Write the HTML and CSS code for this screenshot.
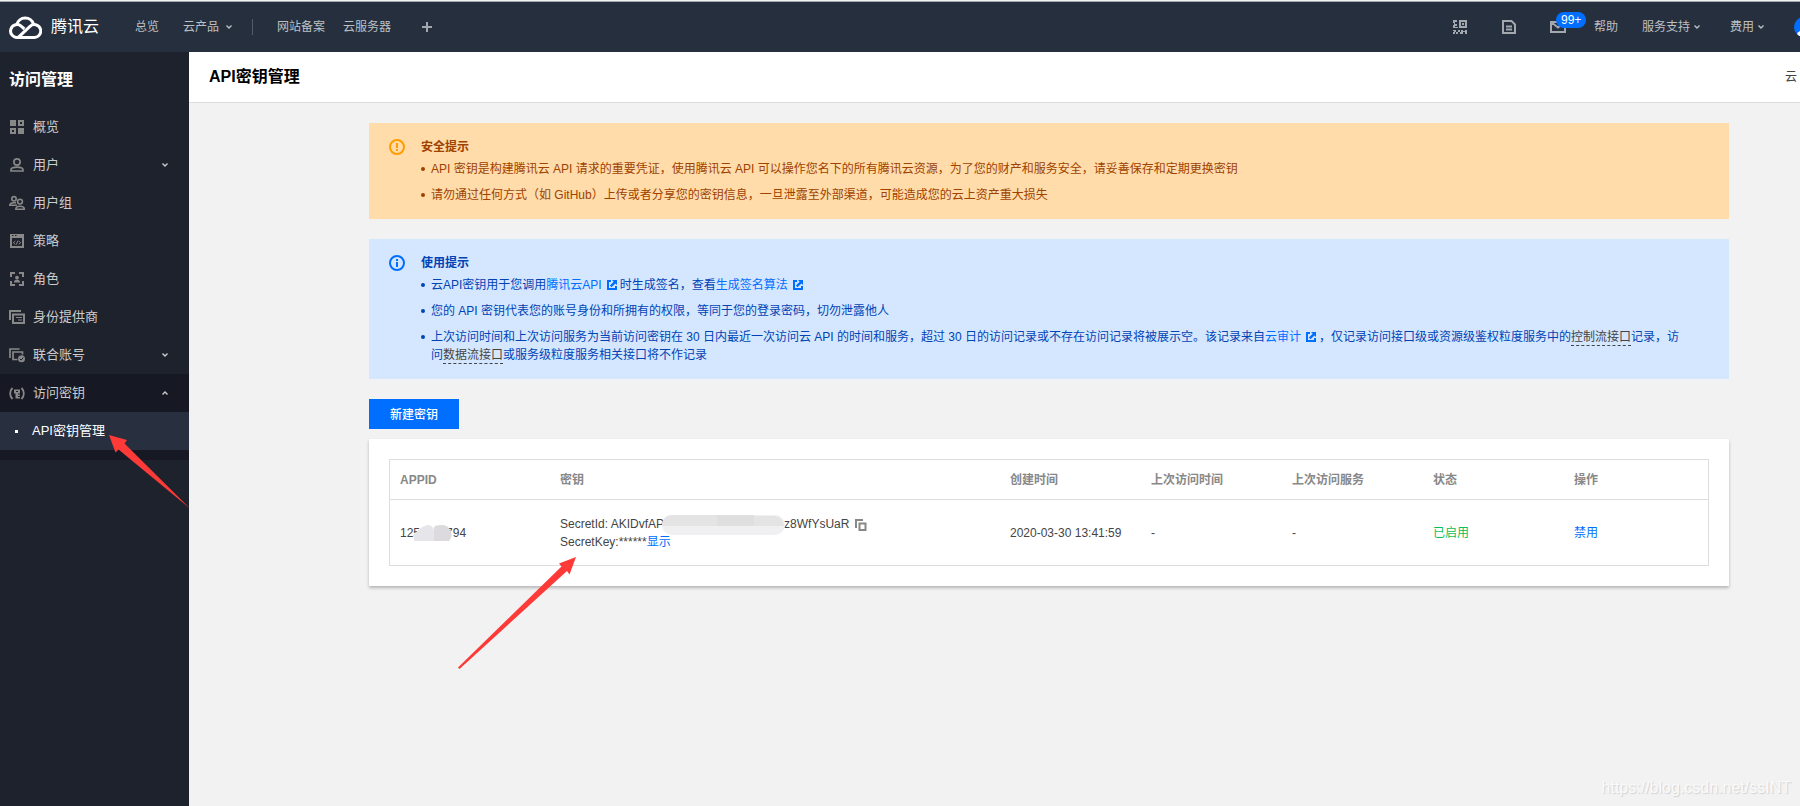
FILE: index.html
```html
<!DOCTYPE html>
<html lang="zh-CN">
<head>
<meta charset="utf-8">
<meta name="viewport" content="width=device-width, initial-scale=1">
<title>API密钥管理 - 访问管理 - 腾讯云</title>
<link rel="stylesheet" href="styles.css">
</head>
<body>
<svg class="defs" aria-hidden="true">
  <symbol id="chevron" viewBox="0 0 6 6"><path d="M0.5 1.5L3 4L5.5 1.5" fill="none" stroke="currentColor" stroke-width="1.4"/></symbol>
  <symbol id="external" viewBox="0 0 10 10"><path d="M0 0H4V2H2V8H8V6H10V10H0ZM5 0H10V5L8.400 3.400L4.500 7.200L2.900 5.600L6.700 1.800Z" fill="currentColor"/></symbol>
</svg>

<header class="topbar">
  <a class="logo" href="#">
    <svg class="logo-mark" viewBox="0 0 33 24" fill="none" stroke="#fff" stroke-width="3" stroke-linejoin="round">
      <path d="M8 22.4H25.5A6.4 6.4 0 1 0 21 11.3L9.5 22.2"/>
      <path d="M8.5 22.4A6.4 6.4 0 1 1 12.4 11.4L15.4 14"/>
      <path d="M7.8 9.6A8.7 8.7 0 0 1 24.6 9.4"/>
    </svg>
    <span>腾讯云</span>
  </a>
  <nav class="nav-main">
    <a href="#">总览</a>
    <a href="#">云产品<svg class="chevron"><use href="#chevron"/></svg></a>
  </nav>
  <nav class="nav-pinned">
    <a href="#">网站备案</a>
    <a href="#">云服务器</a>
  </nav>
  <button class="add" type="button" aria-label="添加">
    <svg viewBox="0 0 10 10"><path d="M4 0H6V4H10V6H6V10H4V6H0V4H4Z" fill="currentColor"/></svg>
  </button>
  <div class="tools">
    <a href="#" aria-label="扫码"><svg class="icon" viewBox="0 0 16 16" fill="currentColor">
      <path fill-rule="evenodd" d="M1 1H5V3H3V5H5V7H3V9H1V6H2V4H1ZM7 1H15V9H7ZM9 3V7H13V3ZM10 4H12V6H10ZM3 8H6V9H3ZM1 11H4V13H6V11H8V13H6V15H4V13H3V15H1V13H2V12H1ZM9 11H11V12H13V11H15V15H13V13H11V15H8V13H9Z"/></svg></a>
    <a href="#" aria-label="工单"><svg class="icon" viewBox="0 0 16 16" fill="none" stroke="currentColor" stroke-width="2">
      <path d="M2 2H10.5L14 5.5V14H2ZM5 7.5H11M5 10.5H11"/></svg></a>
    <a class="mail" href="#" aria-label="消息"><svg class="icon" viewBox="0 0 16 16" fill="none" stroke="currentColor" stroke-width="2">
      <path d="M1 3H15V13H1ZM1 3L8 8.5L15 3"/></svg><span class="badge">99+</span></a>
  </div>
  <nav class="nav-side">
    <a class="help" href="#">帮助</a>
    <a href="#">服务支持<svg class="chevron"><use href="#chevron"/></svg></a>
    <a href="#">费用<svg class="chevron"><use href="#chevron"/></svg></a>
    <a class="avatar" href="#" aria-label="账号"><svg viewBox="0 0 20 20"><circle cx="10" cy="10" r="10" fill="#006eff"/><circle cx="10" cy="8" r="3.5" fill="#fff"/><path d="M3 17A7.5 6 0 0 1 17 17A10 10 0 0 1 3 17Z" fill="#fff"/></svg></a>
  </nav>
</header>

<div class="shell">
  <aside class="sidebar">
    <h2>访问管理</h2>
    <ul class="menu">
      <li><a href="#"><svg class="icon" viewBox="0 0 16 16" fill="currentColor"><path d="M1 1H7V7H1ZM9 1H15V7H9ZM11 3V5H13V3ZM1 9H7V15H1ZM3 11V13H5V11ZM9 9H15V15H9Z" fill-rule="evenodd"/></svg>概览</a></li>
      <li><a href="#"><svg class="icon" viewBox="0 0 16 16" fill="none" stroke="currentColor" stroke-width="1.7"><circle cx="8" cy="5" r="3.1"/><path d="M2 14V13C2 11 5 10.2 8 10.2S14 11 14 13V14Z"/></svg>用户<svg class="chevron"><use href="#chevron"/></svg></a></li>
      <li><a href="#"><svg class="icon" viewBox="0 0 16 16" fill="none" stroke="currentColor" stroke-width="1.6"><circle cx="5" cy="3.8" r="2.2"/><path d="M8 10.3H0.8C0.8 8.2 3 7.7 5 7.7H7"/><circle cx="11" cy="6.6" r="2.4"/><path d="M6.8 14.3C6.8 12 8.6 11.3 11 11.3S15.3 12 15.3 14.3Z"/></svg>用户组</a></li>
      <li><a href="#"><svg class="icon" viewBox="0 0 16 16" fill="none" stroke="currentColor"><path d="M2 2H14V14H2Z" stroke-width="2"/><path d="M2 4H14" stroke-width="2"/><path d="M3 2.500H4.500M6 2.500H7.500" stroke="#1e222d"/><path d="M6.3 8L4.3 9.7L6.3 11.4M9.7 8L11.7 9.7L9.7 11.4M8.9 7.7L7.2 11.7"/></svg>策略</a></li>
      <li><a href="#"><svg class="icon" viewBox="0 0 16 16" fill="none" stroke="currentColor" stroke-width="2"><path d="M2 6V2H6M10 2H14V6M14 10V14H10M6 14H2V10"/><circle cx="8" cy="6.6" r="1.9" fill="currentColor" stroke="none"/><path d="M4.8 11.6C5 9.2 6.6 8.8 8 8.8S11 9.2 11.2 11.6Z" fill="currentColor" stroke="none"/></svg>角色</a></li>
      <li><a href="#"><svg class="icon" viewBox="0 0 16 16" fill="none" stroke="currentColor"><path d="M1 11V2H12" stroke-width="2"/><path d="M4 5.5H15V14H4Z" stroke-width="2"/><path d="M7 8.5H13M9 11H13" stroke-width="1"/></svg>身份提供商</a></li>
      <li><a href="#"><svg class="icon" viewBox="0 0 16 16" fill="none" stroke="currentColor" stroke-width="1.7"><path d="M1 11V2H10.5M8.5 12.5H4V5H13.5V7.5"/><circle cx="12.5" cy="11.8" r="3.5" fill="currentColor" stroke="none"/><path d="M10.8 11.8L12.1 13.1L14.3 10.6" stroke="#1e222d" stroke-width="1"/></svg>联合账号<svg class="chevron"><use href="#chevron"/></svg></a></li>
      <li class="open">
        <a href="#"><svg class="icon" viewBox="0 0 16 16" fill="none" stroke="currentColor" stroke-width="1.8"><path d="M3.5 3C0.4 6 0.4 11 3.5 14M12.5 3C15.6 6 15.6 11 12.5 14"/><path d="M5 4.5H11V8.5H9V9.5H11V11H9V12H11V13.5H6.5V8.5H5ZM7 6V7H9V6Z" fill="currentColor" fill-rule="evenodd" stroke="none"/></svg>访问密钥<svg class="chevron up"><use href="#chevron"/></svg></a>
        <ul class="submenu"><li><a href="#" aria-current="page">API密钥管理</a></li></ul>
      </li>
    </ul>
  </aside>

  <main class="main">
    <div class="titlebar">
      <h1>API密钥管理</h1>
      <a href="#">云</a>
    </div>
    <div class="content">
      <section class="alert warning">
        <svg class="icon" viewBox="0 0 16 16"><circle cx="8" cy="8" r="7" fill="none" stroke="currentColor" stroke-width="2"/><path d="M7 4H9V9H7ZM7 10H9V12H7Z" fill="currentColor"/></svg>
        <div class="alert-body">
          <h4>安全提示</h4>
          <ul>
            <li>API 密钥是构建腾讯云 API 请求的重要凭证，使用腾讯云 API 可以操作您名下的所有腾讯云资源，为了您的财产和服务安全，请妥善保存和定期更换密钥</li>
            <li>请勿通过任何方式（如 GitHub）上传或者分享您的密钥信息，一旦泄露至外部渠道，可能造成您的云上资产重大损失</li>
          </ul>
        </div>
      </section>
      <section class="alert info">
        <svg class="icon" viewBox="0 0 16 16"><circle cx="8" cy="8" r="7" fill="none" stroke="currentColor" stroke-width="2"/><path d="M7 4H9V6H7ZM7 7H9V12H7Z" fill="currentColor"/></svg>
        <div class="alert-body">
          <h4>使用提示</h4>
          <ul>
            <li>云API密钥用于您调用<a href="#">腾讯云API<svg class="external"><use href="#external"/></svg></a>时生成签名，查看<a href="#">生成签名算法<svg class="external"><use href="#external"/></svg></a></li>
            <li>您的 API 密钥代表您的账号身份和所拥有的权限，等同于您的登录密码，切勿泄露他人</li>
            <li>上次访问时间和上次访问服务为当前访问密钥在 30 日内最近一次访问云 API 的时间和服务，超过 30 日的访问记录或不存在访问记录将被展示空。该记录来自<a href="#">云审计<svg class="external"><use href="#external"/></svg></a>，仅记录访问接口级或资源级鉴权粒度服务中的<span class="term">控制流接口</span>记录，访问<span class="term">数据流接口</span>或服务级粒度服务相关接口将不作记录</li>
          </ul>
        </div>
      </section>

      <button class="primary" type="button">新建密钥</button>

      <section class="card">
        <table class="keys">
          <colgroup><col class="col-id"><col class="col-key"><col class="col-info"><col class="col-info"><col class="col-info"><col class="col-info"><col></colgroup>
          <thead>
            <tr><th>APPID</th><th>密钥</th><th>创建时间</th><th>上次访问时间</th><th>上次访问服务</th><th>状态</th><th>操作</th></tr>
          </thead>
          <tbody>
            <tr>
              <td>125<svg class="mask mask-id" viewBox="0 0 38 16"><path d="M0 16V10C3 5 9 1 14 0C17 0 19 2 20 5V16Z" fill="#e6e6ea"/><path d="M20 16V2C22 0 30 -1 34 2C38 6 39 11 35 16Z" fill="#dcdadc"/></svg>794</td>
              <td>SecretId: AKIDvfAP<svg class="mask mask-key" viewBox="0 0 123 20"><rect width="123" height="20" rx="10" fill="#f0f0f2"/><path d="M10 0H91V1H113A10 10 0 0 1 122 11H0A10 10 0 0 1 10 0Z" fill="#e5e4e5"/><path d="M55 0H92V11H55Z" fill="#e0dfe0"/></svg>z8WfYsUaR<button class="copy" type="button" aria-label="复制"><svg viewBox="0 0 12 12" fill="none" stroke="currentColor" stroke-width="2"><path d="M1 9V1H8"/><path d="M4.5 4.5H10.5V11H4.5Z"/></svg></button><br>SecretKey:******<a href="#">显示</a></td>
              <td>2020-03-30 13:41:59</td>
              <td>-</td>
              <td>-</td>
              <td class="enabled">已启用</td>
              <td><a href="#">禁用</a></td>
            </tr>
          </tbody>
        </table>
      </section>
    </div>
  </main>
</div>

<svg class="mark mark-menu" viewBox="0 0 81 74" aria-hidden="true"><path d="M0 0L18 5L15.5 8.5L81 73.5L9.5 14.5L6.500 17.5Z" fill="#fd3a37"/></svg>
<svg class="mark mark-key" viewBox="0 0 118 112" aria-hidden="true"><path d="M118 0L101 6.5L103.5 9.5L0 110.5L1.500 112L109 14L111.5 17.5Z" fill="#fd3a37"/></svg>
<p class="watermark">https://blog.csdn.net/ssINT</p>
</body>
</html>
```

FILE: styles.css
```css
* { box-sizing: border-box; }

body {
  margin: 0;
  min-height: 100vh;
  display: flex;
  flex-direction: column;
  position: relative;
  overflow-x: hidden;
  background: #f2f2f2;
  color: #444;
  font: 12px/18px "Liberation Sans", "Noto Sans CJK SC", sans-serif;
}

h1, h2, h4, p, ul { margin: 0; padding: 0; }
ul { list-style: none; }
a { color: #006eff; text-decoration: none; }
button { border: 0; padding: 0; background: none; font: inherit; color: inherit; cursor: pointer; }
svg { flex: none; }

.defs { position: absolute; width: 0; height: 0; }
.icon { display: block; width: 16px; height: 16px; }
.chevron { width: 6px; height: 6px; }
.chevron.up { transform: rotate(180deg); }

/* Top bar */
.topbar {
  display: flex;
  align-items: center;
  height: 52px;
  padding: 0 0 0 9px;
  overflow: hidden;
  border-top: 1px solid #f0f2f4;
  box-shadow: inset 0 1px #a3a8ae;
  background: #262f3e;
  color: #bcc0c5;
  white-space: nowrap;
}
.topbar a { display: flex; align-items: center; color: inherit; }
.topbar .logo { gap: 9px; color: #fff; font-size: 16px; }
.logo-mark { width: 33px; height: 24px; }
.nav-main, .nav-pinned, .nav-side { display: flex; }
.nav-main { gap: 24px; margin-left: 36px; }
.nav-main .chevron { margin-left: 7px; }
.nav-pinned {
  gap: 18px;
  margin-left: 20px;
  padding-left: 24px;
  border-left: 1px solid #535b67;
  line-height: 16px;
}
.add { display: flex; margin-left: 31px; color: #a3a8ae; }
.add svg { width: 10px; height: 10px; }
.tools { display: flex; gap: 33px; margin-left: auto; color: #a3a8ae; }
.mail { position: relative; }
.badge {
  position: absolute;
  left: 6px;
  top: -7px;
  padding: 0 5px;
  border-radius: 8px;
  background: #006eff;
  color: #fff;
  font-size: 12px;
  line-height: 16px;
}
.nav-side { gap: 30px; margin-left: 28px; }
.nav-side .chevron { margin-left: 4px; }
.help { margin-right: -6px; }
.avatar { margin-right: -14px; }
.avatar svg { width: 20px; height: 20px; }

/* Side menu */
.shell { display: flex; flex: 1; }
.sidebar { flex: none; width: 189px; background: #1e222d; color: #ccc; font-size: 13px; }
.sidebar h2 { padding: 16px 9px; color: #fff; font-size: 16px; line-height: 24px; }
.menu a { display: flex; align-items: center; gap: 8px; height: 38px; padding: 0 21px 0 9px; color: inherit; }
.menu .icon { color: #888; }
.menu .chevron { margin-left: auto; }
.open { padding-bottom: 10px; background: #161923; }
.submenu a { gap: 14px; padding-left: 15px; background: #28303f; color: #fff; }
.submenu a::before { content: ""; width: 3px; height: 3px; background: #fff; }

/* Page */
.main { flex: 1; min-width: 0; }
.titlebar {
  display: flex;
  align-items: center;
  justify-content: space-between;
  height: 51px;
  padding: 0 3px 0 20px;
  border-bottom: 1px solid #ddd;
  background: #fff;
}
.titlebar h1 { color: #000; font-size: 16px; line-height: 24px; }
.titlebar a { color: #444; }
.content { padding: 20px 71px 20px 180px; }

.alert { display: flex; gap: 16px; margin-bottom: 20px; padding: 15px 40px 15px 20px; }
.alert .icon { margin-top: 1px; }
.alert-body { flex: 1; }
.alert h4 { margin-bottom: 4px; font-size: 12px; }
.alert li { position: relative; padding-left: 10px; }
.alert li + li { margin-top: 8px; }
.alert li::before {
  content: "";
  position: absolute;
  left: 0;
  top: 7px;
  width: 4px;
  height: 4px;
  border-radius: 50%;
  background: currentColor;
}
.warning { background: #ffdcaa; color: #9e4200; }
.warning .icon { color: #ff9d00; }
.info { background: #d5e7ff; color: #0043b5; }
.info .icon { color: #006eff; }
.external { width: 10px; height: 10px; margin: 0 3px 0 5px; vertical-align: -1px; }
.term { padding-bottom: 1px; border-bottom: 1px dashed #444; color: #444; }

.primary { display: block; height: 30px; padding: 1px 21px 0; background: #006eff; color: #fff; font-weight: 500; }

.card { margin-top: 10px; padding: 20px; background: #fff; box-shadow: 0 2px 3px rgba(0, 0, 0, .25); }
.keys { width: 100%; table-layout: fixed; border-collapse: separate; border-spacing: 0; border: 1px solid #ddd; }
.keys th, .keys td { padding: 0 10px; text-align: left; }
.keys th { height: 40px; border-bottom: 1px solid #ddd; color: #888; font-weight: bold; }
.keys td { height: 65px; white-space: nowrap; }
.col-id { width: 160px; }
.col-key { width: 450px; }
.col-info { width: 141px; }
.enabled { color: #0abf5b; }
.mask { position: relative; }
.mask-id { width: 38px; height: 16px; margin: 0 -6px; vertical-align: -4px; }
.mask-key { width: 123px; height: 20px; margin: -4px -1px -4px -2px; vertical-align: -3px; }
.copy { margin: -2px 0 -2px 6px; color: #888; vertical-align: -3px; }
.copy svg { display: block; width: 12px; height: 12px; }

/* Pointers and watermark lie over the page */
.mark { position: absolute; pointer-events: none; }
.mark-menu { left: 109px; top: 435px; width: 81px; height: 74px; }
.mark-key { left: 458px; top: 557px; width: 118px; height: 112px; }
.watermark {
  position: absolute;
  right: 9px;
  bottom: 6px;
  color: #fafafa;
  font-size: 16px;
  line-height: 24px;
  text-shadow: 1px 1px 1px #d0d0d0;
}
```
